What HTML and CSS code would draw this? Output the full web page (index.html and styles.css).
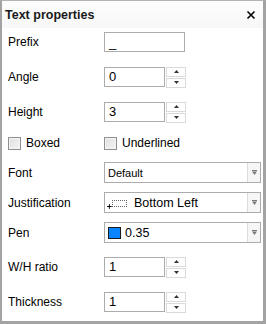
FILE: index.html
```html
<!DOCTYPE html>
<html lang="en">
<head>
    <meta charset="UTF-8">
    <title>Text properties</title>
    <link rel="stylesheet" href="styles.css">
</head>
<body>
    <div class="panel">
        <div class="titlebar">
            <span class="title">Text properties</span>
            <svg class="close" width="10" height="10" viewBox="0 0 10 10">
                <path d="M1.5 1.5 L8.5 8.5 M8.5 1.5 L1.5 8.5" stroke="#000" stroke-width="1.6"/>
            </svg>
        </div>
        <div class="form">
            <div class="row">
                <label>Prefix</label>
                <div class="field text-field">_</div>
            </div>
            <div class="row spaced">
                <label>Angle</label>
                <div class="spin">
                    <div class="field num-field">0</div>
                    <div class="spin-buttons">
                        <div class="spin-btn"><svg width="5" height="3" viewBox="0 0 5 3"><path d="M2.5 0 L5 3 L0 3 Z" fill="#333"/></svg></div>
                        <div class="spin-btn"><svg width="5" height="3" viewBox="0 0 5 3"><path d="M0 0 L5 0 L2.5 3 Z" fill="#333"/></svg></div>
                    </div>
                </div>
            </div>
            <div class="row spaced">
                <label>Height</label>
                <div class="spin">
                    <div class="field num-field">3</div>
                    <div class="spin-buttons">
                        <div class="spin-btn"><svg width="5" height="3" viewBox="0 0 5 3"><path d="M2.5 0 L5 3 L0 3 Z" fill="#333"/></svg></div>
                        <div class="spin-btn"><svg width="5" height="3" viewBox="0 0 5 3"><path d="M0 0 L5 0 L2.5 3 Z" fill="#333"/></svg></div>
                    </div>
                </div>
            </div>
            <div class="row checks">
                <div class="check"><span class="box"></span>Boxed</div>
                <div class="check"><span class="box"></span>Underlined</div>
            </div>
            <div class="row select-row first">
                <label>Font</label>
                <div class="select">
                    <span class="value small">Default</span>
                    <span class="drop"><svg width="5" height="5" viewBox="0 0 5 5"><path d="M0 0 H5 V1 H0 Z M0 1.5 L5 1.5 L2.5 5 Z" fill="#777"/></svg></span>
                </div>
            </div>
            <div class="row select-row">
                <label>Justification</label>
                <div class="select">
                    <span class="value">
                        <span class="just-icon">
                            <span class="just-frame"></span>
                            <svg class="just-anchor" width="5" height="5" viewBox="0 0 5 5"><path d="M0 2.5 H5 M2.5 0 V5" stroke="#000" stroke-width="1"/></svg>
                        </span>
                        Bottom Left
                    </span>
                    <span class="drop"><svg width="5" height="5" viewBox="0 0 5 5"><path d="M0 0 H5 V1 H0 Z M0 1.5 L5 1.5 L2.5 5 Z" fill="#777"/></svg></span>
                </div>
            </div>
            <div class="row select-row">
                <label>Pen</label>
                <div class="select">
                    <span class="value">
                        <span class="swatch"></span>
                        0.35
                    </span>
                    <span class="drop"><svg width="5" height="5" viewBox="0 0 5 5"><path d="M0 0 H5 V1 H0 Z M0 1.5 L5 1.5 L2.5 5 Z" fill="#777"/></svg></span>
                </div>
            </div>
            <div class="row after-select">
                <label>W/H ratio</label>
                <div class="spin">
                    <div class="field num-field">1</div>
                    <div class="spin-buttons">
                        <div class="spin-btn"><svg width="5" height="3" viewBox="0 0 5 3"><path d="M2.5 0 L5 3 L0 3 Z" fill="#333"/></svg></div>
                        <div class="spin-btn"><svg width="5" height="3" viewBox="0 0 5 3"><path d="M0 0 L5 0 L2.5 3 Z" fill="#333"/></svg></div>
                    </div>
                </div>
            </div>
            <div class="row spaced">
                <label>Thickness</label>
                <div class="spin">
                    <div class="field num-field">1</div>
                    <div class="spin-buttons">
                        <div class="spin-btn"><svg width="5" height="3" viewBox="0 0 5 3"><path d="M2.5 0 L5 3 L0 3 Z" fill="#333"/></svg></div>
                        <div class="spin-btn"><svg width="5" height="3" viewBox="0 0 5 3"><path d="M0 0 L5 0 L2.5 3 Z" fill="#333"/></svg></div>
                    </div>
                </div>
            </div>
        </div>
    </div>
</body>
</html>
```

FILE: styles.css
```css
body {
    margin: 0;
    padding: 0;
    background: #fff;
    font-family: 'Liberation Sans', Arial, sans-serif;
    font-size: 12px;
    color: #000;
}

.panel {
    width: 266px;
    height: 324px;
    box-sizing: border-box;
    border: 3px solid #a3a3a3;
    border-top: 1px solid #b4b4b4;
    border-left-width: 2px;
    background: #fff;
}

.titlebar {
    height: 27px;
    display: flex;
    align-items: center;
    justify-content: space-between;
    padding: 1px 7px 0 3px;
    box-sizing: border-box;
    background: linear-gradient(#fdfdfd, #f7f7f7);
}

.title {
    font-weight: bold;
    font-size: 12.5px;
    color: #1a1a1a;
}

.form {
    display: flex;
    flex-direction: column;
    padding: 4px 0 0 6px;
}

.row {
    display: flex;
    align-items: center;
    height: 20px;
}

.row label {
    width: 96px;
}

.row.spaced {
    margin-top: 15px;
}

.field {
    box-sizing: border-box;
    height: 20px;
    border: 1px solid #acacac;
    padding: 0 4px;
    display: flex;
    align-items: center;
    font-size: 13px;
}

.text-field {
    width: 81px;
}

.num-field {
    width: 61px;
}

.spin {
    display: flex;
    gap: 1px;
}

.spin-buttons {
    display: flex;
    flex-direction: column;
    gap: 1px;
}

.spin-btn {
    box-sizing: border-box;
    width: 20px;
    height: 10px;
    border: 1px solid #dadada;
    background: #fff;
    display: flex;
    align-items: center;
    justify-content: center;
}

.checks {
    margin-top: 14px;
    height: 14px;
}

.check {
    display: flex;
    align-items: center;
    width: 96px;
}

.box {
    box-sizing: border-box;
    width: 13px;
    height: 13px;
    border: 1px solid #8f8f8f;
    box-shadow: inset 0 0 0 1px #f5f5f5;
    background: linear-gradient(135deg, #dedede, #f6f6f6);
    margin-right: 5px;
}

.select-row {
    height: 21px;
    margin-top: 9px;
}

.select-row.first {
    margin-top: 12px;
}

.select {
    box-sizing: border-box;
    width: 157px;
    height: 21px;
    border: 1px solid #acacac;
    display: flex;
    align-items: stretch;
}

.select .value {
    flex: 1;
    display: flex;
    align-items: center;
    padding-left: 3px;
    font-size: 12.5px;
}

.select .value.small {
    font-size: 11px;
}

.drop {
    width: 12px;
    border-left: 1px solid #dcdcdc;
    background: #f6f6f6;
    display: flex;
    align-items: center;
    justify-content: center;
}

.just-icon {
    display: flex;
    align-items: flex-end;
    width: 20px;
    height: 11px;
    margin: 2px 7px 0 -1px;
}

.just-frame {
    box-sizing: border-box;
    width: 16px;
    height: 7px;
    border: 1px dotted #666;
    margin: 0 0 2px 3px;
    order: 2;
}

.just-anchor {
    order: 1;
    margin-right: -3px;
}

.swatch {
    box-sizing: border-box;
    width: 13px;
    height: 12px;
    border: 1px solid #1a1a1a;
    background: #0a84ff;
    margin-right: 4px;
}

.row.after-select {
    margin-top: 14px;
}
```
